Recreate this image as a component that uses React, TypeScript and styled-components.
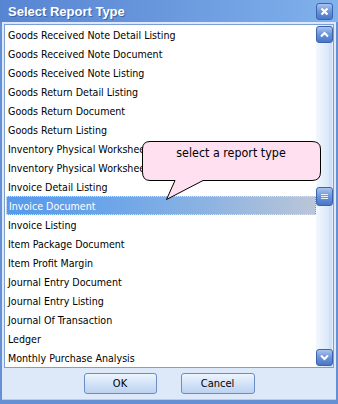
import styled, { createGlobalStyle } from "styled-components";

const GlobalStyle = createGlobalStyle`
  html, body {
    margin: 0;
    padding: 0;
    background: #ffffff;
  }
  body {
    font-family: "Liberation Sans", Arial, sans-serif;
  }
`;

const reportTypes = [
  "Goods Received Note Detail Listing",
  "Goods Received Note Document",
  "Goods Received Note Listing",
  "Goods Return Detail Listing",
  "Goods Return Document",
  "Goods Return Listing",
  "Inventory Physical Worksheet Document",
  "Inventory Physical Worksheet Listing",
  "Invoice Detail Listing",
  "Invoice Document",
  "Invoice Listing",
  "Item Package Document",
  "Item Profit Margin",
  "Journal Entry Document",
  "Journal Entry Listing",
  "Journal Of Transaction",
  "Ledger",
  "Monthly Purchase Analysis",
];

const Window = styled.div`
  position: relative;
  width: 338px;
  height: 404px;
  display: flex;
  flex-direction: column;
`;

const TitleBar = styled.div`
  height: 22px;
  flex: none;
  display: flex;
  align-items: center;
  justify-content: space-between;
  padding: 0 5px 0 8px;
  background: linear-gradient(to right, #5885d2, #6896dc 45%, #80b2ec);
`;

const Title = styled.span`
  color: #ffffff;
  font-weight: bold;
  font-size: 13px;
  text-shadow: 1px 1px 0 #3b63a8;
`;

const BlueButton = styled.div`
  width: 17px;
  height: 17px;
  box-sizing: border-box;
  display: flex;
  align-items: center;
  justify-content: center;
  border: 1px solid #3c64ae;
  border-radius: 3px;
  background: linear-gradient(to bottom, #a8c4f0, #6b93d8 50%, #4a76c6);
`;

const Frame = styled.div`
  flex: 1;
  display: flex;
  flex-direction: column;
  background: #dde9f8;
  border-left: 2px solid #6590d4;
  border-right: 2px solid #6590d4;
  border-bottom: 4px solid #6590d4;
  padding: 2px 2px 0;
  box-shadow: inset 0 -1px 0 #b4cdf0;
`;

const ListBox = styled.div`
  height: 344px;
  box-sizing: border-box;
  display: flex;
  border: 1px solid #7c9fd3;
  background: #ffffff;
`;

const Items = styled.div`
  flex: 1;
  display: flex;
  flex-direction: column;
  overflow: hidden;
`;

const Item = styled.div<{ $selected?: boolean }>`
  height: 19px;
  line-height: 20px;
  box-sizing: border-box;
  padding-left: 3px;
  font-family: "DejaVu Sans Condensed", "DejaVu Sans", sans-serif;
  font-size: 10.6px;
  white-space: nowrap;
  color: ${(p) => (p.$selected ? "#ffffff" : "#000000")};
  ${(p) =>
    p.$selected &&
    `
    margin-left: 1px;
    padding-left: 2px;
    line-height: 18px;
    border: 1px dotted #d6e2f2;
    background: linear-gradient(to right, #5699ec, #6ea6e8 35%, #8db3e2 65%, #bac6d8);
  `}
`;

const ScrollBar = styled.div`
  width: 17px;
  flex: none;
  display: flex;
  flex-direction: column;
  justify-content: space-between;
  padding: 1px 0;
  background: linear-gradient(to right, #f3f8fe, #dce9f9 70%, #c9dcf5 90%, #eef5fd);
`;

const Footer = styled.div`
  height: 32px;
  display: flex;
  justify-content: center;
  gap: 24px;
  padding-top: 5px;
  box-sizing: border-box;
`;

const DialogButton = styled.button<{ $width: number }>`
  width: ${(p) => p.$width}px;
  height: 21px;
  padding: 0;
  border: 1px solid #6a8dc8;
  border-radius: 3px;
  background: linear-gradient(to bottom, #eef5fe, #d3e3f8 50%, #bcd2f0);
  font-family: "DejaVu Sans Condensed", "DejaVu Sans", sans-serif;
  font-size: 11px;
  color: #000000;
`;

const Callout = styled.div`
  position: absolute;
  left: 141px;
  top: 140px;
  width: 181px;
  height: 62px;
`;

const CalloutText = styled.div`
  position: absolute;
  left: 0;
  top: 5px;
  width: 180px;
  text-align: center;
  font-family: "DejaVu Sans Condensed", "DejaVu Sans", sans-serif;
  font-size: 12.4px;
  color: #000000;
`;

const Chevron = ({ up }: { up?: boolean }) => (
  <svg width="9" height="7" viewBox="0 0 9 7">
    <path
      d={up ? "M1 5.5 L4.5 2 L8 5.5" : "M1 1.5 L4.5 5 L8 1.5"}
      stroke="#ffffff"
      strokeWidth="2"
      fill="none"
    />
  </svg>
);

const CloseGlyph = () => (
  <svg width="9" height="9" viewBox="0 0 9 9">
    <path d="M1.5 1.5 L7.5 7.5 M7.5 1.5 L1.5 7.5" stroke="#ffffff" strokeWidth="2.2" />
  </svg>
);

const Grip = () => (
  <svg width="7" height="7" viewBox="0 0 7 7">
    <path d="M0 1.5 H7 M0 3.5 H7 M0 5.5 H7" stroke="#e8f0fc" strokeWidth="1" />
  </svg>
);

export default function App() {
  const selected = "Invoice Document";

  return (
    <>
      <GlobalStyle />
      <Window>
        <TitleBar>
          <Title>Select Report Type</Title>
          <BlueButton>
            <CloseGlyph />
          </BlueButton>
        </TitleBar>
        <Frame>
          <ListBox>
            <Items>
              {reportTypes.map((name) => (
                <Item key={name} $selected={name === selected}>
                  {name}
                </Item>
              ))}
            </Items>
            <ScrollBar>
              <BlueButton>
                <Chevron up />
              </BlueButton>
              <BlueButton style={{ height: 19 }}>
                <Grip />
              </BlueButton>
              <BlueButton>
                <Chevron />
              </BlueButton>
            </ScrollBar>
          </ListBox>
          <Footer>
            <DialogButton $width={73}>OK</DialogButton>
            <DialogButton $width={74}>Cancel</DialogButton>
          </Footer>
        </Frame>
        <Callout>
          <svg width="181" height="62" viewBox="0 0 181 62">
            <path
              d="M9 1.5 H171 Q179.5 1.5 179.5 9 V32 Q179.5 40.5 171 40.5 H62 L25.5 59.5 L34 40.5 H9 Q1.5 40.5 1.5 32 V9 Q1.5 1.5 9 1.5 Z"
              fill="#ffe0f0"
              stroke="#000000"
              strokeWidth="1"
            />
          </svg>
          <CalloutText>select a report type</CalloutText>
        </Callout>
      </Window>
    </>
  );
}
